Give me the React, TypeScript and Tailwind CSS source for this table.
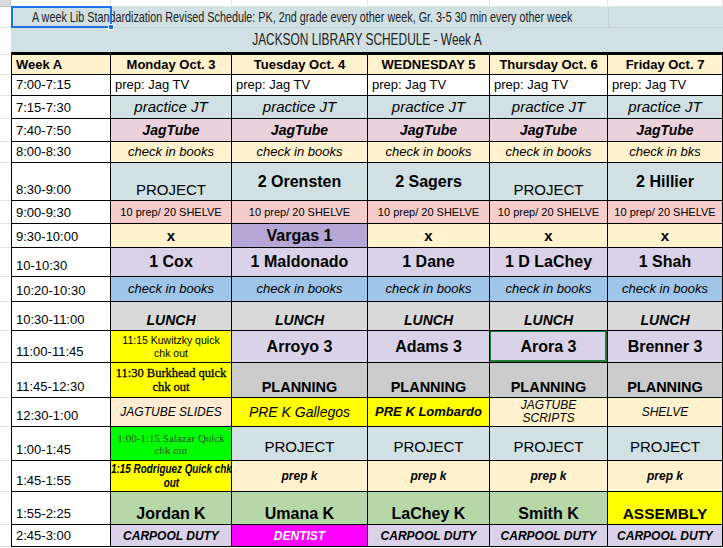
type Cell = {
  t: string | string[]
  bg: string
  f: string
  v?: 'c' | 'b'
  left?: boolean
  mark?: boolean
}

interface Row {
  time: string
  h: string
  cells: Cell[]
}

const serif = "font-['Liberation_Serif','DejaVu_Serif',serif]"

const widths = ['w-[100px]', 'w-[121px]', 'w-[136px]', 'w-[122px]', 'w-[118px]', 'w-[115px]']

const five = (c: Cell): Cell[] => [c, c, c, c, c]

const cyan = 'bg-[#d0e0e3]'
const pale = 'bg-[#fff2cc]'
const lilac = 'bg-[#d9d2e9]'
const yellow = 'bg-[#ffff00]'
const big = 'text-[16px] font-bold'

const rows: Row[] = [
  { time: '7:00-7:15', h: 'h-[21px]', cells: five({ t: 'prep: Jag TV', bg: 'bg-white', f: 'text-[13px]', left: true }) },
  { time: '7:15-7:30', h: 'h-[23px]', cells: five({ t: 'practice JT', bg: cyan, f: 'text-[15px] italic', v: 'c' }) },
  { time: '7:40-7:50', h: 'h-[23px]', cells: five({ t: 'JagTube', bg: 'bg-[#ead1dc]', f: 'text-[14px] font-bold italic', v: 'c' }) },
  {
    time: '8:00-8:30',
    h: 'h-[21px]',
    cells: [
      ...five({ t: 'check in books', bg: pale, f: 'text-[13px] italic', v: 'c' }).slice(0, 4),
      { t: 'check in bks', bg: pale, f: 'text-[13px] italic', v: 'c' },
    ],
  },
  {
    time: '8:30-9:00',
    h: 'h-[38px]',
    cells: [
      { t: 'PROJECT', bg: cyan, f: 'text-[15px]' },
      { t: '2 Orensten', bg: cyan, f: big, v: 'c' },
      { t: '2 Sagers', bg: cyan, f: big, v: 'c' },
      { t: 'PROJECT', bg: cyan, f: 'text-[15px]' },
      { t: '2 Hillier', bg: cyan, f: big, v: 'c' },
    ],
  },
  { time: '9:00-9:30', h: 'h-[23px]', cells: five({ t: '10 prep/ 20 SHELVE', bg: 'bg-[#f4cccc]', f: 'text-[11px]', v: 'c' }) },
  {
    time: '9:30-10:00',
    h: 'h-[24px]',
    cells: [
      { t: 'x', bg: pale, f: 'text-[15px] font-bold', v: 'c' },
      { t: 'Vargas 1', bg: 'bg-[#b4a7d6]', f: big, v: 'c' },
      { t: 'x', bg: pale, f: 'text-[15px] font-bold', v: 'c' },
      { t: 'x', bg: pale, f: 'text-[15px] font-bold', v: 'c' },
      { t: 'x', bg: pale, f: 'text-[15px] font-bold', v: 'c' },
    ],
  },
  {
    time: '10-10:30',
    h: 'h-[29px]',
    cells: ['1 Cox', '1 Maldonado', '1 Dane', '1 D LaChey', '1 Shah'].map(t => ({ t, bg: lilac, f: big, v: 'c' as const })),
  },
  { time: '10:20-10:30', h: 'h-[25px]', cells: five({ t: 'check in books', bg: 'bg-[#9fc5e8]', f: 'text-[13px] italic', v: 'c' }) },
  { time: '10:30-11:00', h: 'h-[29px]', cells: five({ t: 'LUNCH', bg: 'bg-[#d9d9d9]', f: 'text-[14px] font-bold italic' }) },
  {
    time: '11:00-11:45',
    h: 'h-[32px]',
    cells: [
      { t: ['11:15 Kuwitzky quick', 'chk out'], bg: yellow, f: 'text-[10.5px] leading-[13px]', v: 'c' },
      { t: 'Arroyo 3', bg: lilac, f: big, v: 'c' },
      { t: 'Adams 3', bg: lilac, f: big, v: 'c' },
      { t: 'Arora 3', bg: lilac, f: big, v: 'c', mark: true },
      { t: 'Brenner 3', bg: lilac, f: big, v: 'c' },
    ],
  },
  {
    time: '11:45-12:30',
    h: 'h-[35px]',
    cells: [
      { t: ['11:30 Burkhead quick', 'chk out'], bg: yellow, f: `${serif} text-[12.5px] leading-[14px] [-webkit-text-stroke:0.3px_black]`, v: 'c' },
      ...five({ t: 'PLANNING', bg: 'bg-[#cccccc]', f: 'text-[14.5px] font-bold' }).slice(0, 4),
    ],
  },
  {
    time: '12:30-1:00',
    h: 'h-[29px]',
    cells: [
      { t: 'JAGTUBE SLIDES', bg: 'bg-[#fdecd2]', f: 'text-[12px] italic', v: 'c' },
      { t: 'PRE K Gallegos', bg: yellow, f: 'text-[14px] italic', v: 'c' },
      { t: 'PRE K Lombardo', bg: yellow, f: 'text-[13px] font-bold italic', v: 'c' },
      { t: ['JAGTUBE', 'SCRIPTS'], bg: pale, f: 'text-[12px] italic leading-[13px]', v: 'c' },
      { t: 'SHELVE', bg: pale, f: 'text-[12px] italic', v: 'c' },
    ],
  },
  {
    time: '1:00-1:45',
    h: 'h-[34px]',
    cells: [
      { t: ['1:00-1:15 Salazar Quick', 'chk out'], bg: 'bg-[#00ff00]', f: `${serif} text-[11px] text-[#2f4f2f] leading-[12px]`, v: 'c' },
      ...five({ t: 'PROJECT', bg: cyan, f: 'text-[15px] mb-[3px]' }).slice(0, 4),
    ],
  },
  {
    time: '1:45-1:55',
    h: 'h-[31px]',
    cells: [
      { t: ['1:15 Rodriguez Quick chk', 'out'], bg: yellow, f: 'text-[13px] font-bold italic leading-[14px] scale-x-[0.76]', v: 'c' },
      ...five({ t: 'prep k', bg: pale, f: 'text-[12px] font-bold italic', v: 'c' }).slice(0, 4),
    ],
  },
  {
    time: '1:55-2:25',
    h: 'h-[33px]',
    cells: [
      ...['Jordan K', 'Umana K', 'LaChey K', 'Smith K'].map(t => ({ t, bg: 'bg-[#b6d7a8]', f: big })),
      { t: 'ASSEMBLY', bg: yellow, f: 'text-[15.5px] font-bold' },
    ],
  },
  {
    time: '2:45-3:00',
    h: 'h-[22px]',
    cells: [
      { t: 'CARPOOL DUTY', bg: lilac, f: 'text-[12px] font-bold italic', v: 'c' },
      { t: 'DENTIST', bg: 'bg-[#ff00ff]', f: 'text-[12px] font-bold italic text-white', v: 'c' },
      { t: 'CARPOOL DUTY', bg: lilac, f: 'text-[12px] font-bold italic', v: 'c' },
      { t: 'CARPOOL DUTY', bg: lilac, f: 'text-[12px] font-bold italic', v: 'c' },
      { t: 'CARPOOL DUTY', bg: lilac, f: 'text-[12px] font-bold italic', v: 'c' },
    ],
  },
]

const days = ['Monday Oct. 3', 'Tuesday Oct. 4', 'WEDNESDAY 5', 'Thursday Oct. 6', 'Friday Oct. 7']

function Strip() {
  return <div className="w-[11px] shrink-0 border-b border-[#e2e3e3] bg-white" />
}

function Body({ cell, w }: { cell: Cell; w: string }) {
  const align = cell.left ? 'justify-start text-left pl-[4px]' : 'justify-center text-center'
  const vert = cell.v === 'c' ? 'items-center' : 'items-end pb-[2px]'
  return (
    <div className={`${w} ${cell.bg} ${align} ${vert} relative shrink-0 flex border-r border-b border-black overflow-hidden`}>
      <div className={`${cell.f} shrink-0 whitespace-nowrap ${Array.isArray(cell.t) ? '' : 'leading-[16px]'}`}>
        {Array.isArray(cell.t) ? cell.t.map(l => <div key={l}>{l}</div>) : cell.t}
      </div>
      {cell.mark && <div className="absolute -top-px -left-px right-0 bottom-0 border-2 border-[#1e7e34]" />}
    </div>
  )
}

export default function App() {
  return (
    <div className="w-[723px] h-[548px] overflow-hidden bg-white text-black font-['Liberation_Sans',Arial,sans-serif]">
      {/* empty sheet row */}
      <div className="flex h-[7px]">
        <div className="w-[11px] shrink-0 bg-[#dadce0] border-r border-b border-[#c0c0c0]" />
        {widths.map(w => (
          <div key={w} className={`${w} shrink-0 border-r border-b border-[#e2e3e3]`} />
        ))}
      </div>

      {/* note row */}
      <div className="flex h-[21px] relative">
        <Strip />
        <div className="w-[597px] shrink-0 bg-[#d0e0e3] border-b border-[#c6d3d6] flex items-center pl-[21px] whitespace-nowrap overflow-visible">
          <span className="inline-block shrink-0 origin-left scale-x-[0.72] text-[15px] text-[#222]">
            A week Lib Standardization Revised Schedule: PK, 2nd grade every other week, Gr. 3-5 30 min every other week
          </span>
        </div>
        <div className="w-[115px] shrink-0 bg-[#d0e0e3] border-l border-b border-[#c6d3d6]" />
        <div className="absolute left-[11px] -top-px w-[101px] h-[22px] border-2 border-[#1a73e8]" />
        <div className="absolute left-[108px] top-[17px] w-[6px] h-[6px] bg-[#1a73e8] border border-white" />
      </div>

      {/* title row */}
      <div className="flex h-[27px]">
        <Strip />
        <div className="w-[712px] shrink-0 bg-[#d0e0e3] border-b-[3px] border-black flex items-center justify-center">
          <span className="inline-block shrink-0 scale-x-[0.7] text-[17px] text-[#222]">JACKSON LIBRARY SCHEDULE - Week A</span>
        </div>
      </div>

      {/* header */}
      <div className="flex h-[20px]">
        <Strip />
        <div className="w-[100px] shrink-0 bg-[#fff2cc] border-l border-r border-b border-black flex items-center pl-[4px] text-[13px] font-bold">
          Week A
        </div>
        {days.map((d, i) => (
          <div key={d} className={`${widths[i + 1]} shrink-0 bg-[#fff2cc] border-r border-b border-black flex items-center justify-center text-[13px] font-bold whitespace-nowrap`}>
            {d}
          </div>
        ))}
      </div>

      {rows.map(r => (
        <div key={r.time} className={`flex ${r.h}`}>
          <Strip />
          <div className="w-[100px] shrink-0 bg-white border-l border-r border-b border-black flex items-end pl-[4px] pb-[2px] text-[13px] leading-[16px]">
            {r.time}
          </div>
          {r.cells.map((c, i) => (
            <Body key={i} cell={c} w={widths[i + 1]} />
          ))}
        </div>
      ))}
    </div>
  )
}
